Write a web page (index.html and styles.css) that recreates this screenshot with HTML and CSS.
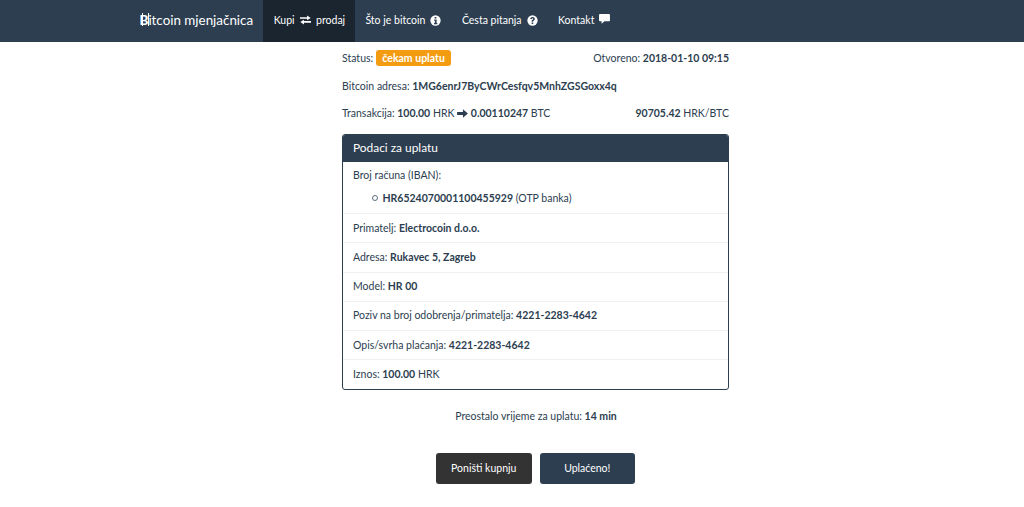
FILE: index.html
```html
<!DOCTYPE html>
<html lang="hr">
<head>
<meta charset="utf-8">
<title>Bitcoin mjenjačnica</title>
<link rel="stylesheet" href="styles.css">
</head>
<body>
<nav class="navbar">
  <a class="brand"><span class="brand-b">B</span>itcoin mjenjačnica</a>
  <a class="nav-link active">Kupi
    <svg class="ico swap" viewBox="0 0 14 12"><path d="M0 2.600h9V0.400L13.600 3.600 9 6.200V4.400H0zM14 7.400H5V5.600L0.400 8.600 5 11.600V9.400h9z" fill="#fff"/></svg>
    prodaj</a>
  <a class="nav-link">Što je bitcoin
    <svg class="ico" viewBox="0 0 12 12"><circle cx="6" cy="6" r="5.600" fill="#fff"/><path d="M5 2.200h2v1.700H5zM4.600 5h2.600v3.600h.8V10H4.400V8.600h.9V6.300h-.7z" fill="#2c3e50"/></svg></a>
  <a class="nav-link">Česta pitanja
    <svg class="ico" viewBox="0 0 12 12"><circle cx="6" cy="6" r="5.600" fill="#fff"/><path d="M3.600 4.400C3.800 3 4.800 2.300 6.100 2.300c1.400 0 2.400.9 2.400 2 0 1-.6 1.500-1.200 1.900-.4.3-.6.4-.6.9v.2H5.100v-.4c0-.9.4-1.300 1-1.700.4-.3.7-.5.7-.9 0-.4-.3-.7-.8-.7-.5 0-.8.3-.9.9zM5.100 8.200h1.700v1.500H5.100z" fill="#2c3e50"/></svg></a>
  <a class="nav-link">Kontakt
    <svg class="ico chat" viewBox="0 0 12 11"><path d="M1.200 0h9.600C11.500 0 12 .5 12 1.200v5.600c0 .7-.5 1.200-1.200 1.200H6L2.800 10.800V8H1.200C.5 8 0 7.500 0 6.800V1.200C0 .5.500 0 1.200 0z" fill="#fff"/></svg></a>
</nav>
<main class="content">
  <div class="info-row first">
    <span>Status: <span class="badge">čekam uplatu</span></span>
    <span>Otvoreno: <b>2018-01-10 09:15</b></span>
  </div>
  <div class="info-row">
    <span>Bitcoin adresa: <b>1MG6enrJ7ByCWrCesfqv5MnhZGSGoxx4q</b></span>
  </div>
  <div class="info-row">
    <span>Transakcija: <b>100.00</b> HRK <svg class="arrow" viewBox="0 0 12 10"><path d="M0 3.200h6.500V.3L12 5 6.500 9.700V6.800H0z" fill="#2c3e50"/></svg> <b>0.00110247</b> BTC</span>
    <b>90705.42 <span class="normal">HRK/BTC</span></b>
  </div>
  <section class="panel">
    <h2 class="panel-title">Podaci za uplatu</h2>
    <div class="panel-row iban">
      <div>Broj računa (IBAN):</div>
      <ul class="iban-list"><li><b>HR6524070001100455929</b> (OTP banka)</li></ul>
    </div>
    <div class="panel-row">Primatelj: <b>Electrocoin d.o.o.</b></div>
    <div class="panel-row">Adresa: <b>Rukavec 5, Zagreb</b></div>
    <div class="panel-row">Model: <b>HR 00</b></div>
    <div class="panel-row">Poziv na broj odobrenja/primatelja: <b>4221-2283-4642</b></div>
    <div class="panel-row">Opis/svrha plaćanja: <b>4221-2283-4642</b></div>
    <div class="panel-row">Iznos: <b>100.00</b> HRK</div>
  </section>
  <p class="remaining">Preostalo vrijeme za uplatu: <b>14 min</b></p>
  <div class="actions">
    <button class="btn btn-dark">Poništi kupnju</button>
    <button class="btn btn-primary">Uplaćeno!</button>
  </div>
</main>
</body>
</html>
```
FILE: styles.css
```css
* { box-sizing: border-box; }
html, body { margin: 0; padding: 0; }
body {
  font-family: Lato, "Open Sans", sans-serif;
  font-size: 10.5px;
  line-height: 17px;
  color: #2c3e50;
  background: #fff;
  height: 507px;
  overflow: hidden;
}
b { font-weight: 700; }
.normal { font-weight: 400; }
.navbar {
  display: flex;
  align-items: stretch;
  height: 42px;
  background: #2c3e50;
  padding-left: 139.500px;
  color: #fff;
}
.brand {
  font-size: 13.400px;
  line-height: 40px;
  margin-right: 9.500px;
}
.brand-b {
  position: relative;
  font-weight: 900;
}
.brand-b::before {
  content: "";
  position: absolute;
  left: 2px;
  top: 1px;
  width: 5px;
  height: 13px;
  border-left: 1px solid #fff;
  border-right: 1px solid #fff;
}
.nav-link {
  display: flex;
  align-items: center;
  gap: 3px;
  padding: 0 10.250px 2px;
  height: 42px;
}
.nav-link.active {
  background: #1a252f;
  padding: 0 10px 2px 11px;
}
.ico { width: 11px; height: 11px; margin-left: 2px; }
.swap { width: 11px; height: 10px; margin: -1px 2.500px 0 2px; }
.chat { width: 11px; height: 10px; margin: -2px 0 0 1.500px; }
.content {
  width: 387px;
  margin-left: 342px;
}
.info-row {
  display: flex;
  justify-content: space-between;
  align-items: center;
  height: 17px;
  margin-bottom: 10.500px;
}
.info-row.first { margin-top: 8px; }
.badge {
  display: inline-block;
  background: #f39c12;
  color: #fff;
  font-weight: 700;
  border-radius: 3px;
  padding: 0 6.500px;
  line-height: 16px;
}
.arrow { width: 11px; height: 9px; vertical-align: -0.500px; }
.panel {
  margin-top: 12px;
  border: 1px solid #2c3e50;
  border-radius: 3px;
  overflow: hidden;
  height: 256px;
}
.panel-title {
  margin: 0;
  background: #2c3e50;
  color: #fff;
  font-size: 11.900px;
  font-weight: 400;
  height: 27px;
  line-height: 25px;
  padding-left: 10px;
}
.panel-row {
  padding: 5.500px 10px;
  border-top: 1px solid #f2f2f2;
  height: 29.300px;
}
.panel-row.iban {
  height: 51px;
  border-top: 0;
  padding-top: 5px;
}
.iban-list {
  list-style: none;
  margin: 6px 0 0;
  padding-left: 18.500px;
}
.iban-list li::before {
  content: "";
  display: inline-block;
  width: 4px;
  height: 4px;
  margin-right: 5px;
  border: 1px solid #5d6d7c;
  border-radius: 50%;
  vertical-align: 1.500px;
}
.remaining {
  margin: 18px 0 0;
  text-align: center;
  padding-left: 1px;
}
.actions {
  display: flex;
  gap: 8px;
  margin-top: 27.500px;
  padding-left: 94px;
}
.btn {
  font: inherit;
  color: #fff;
  border: 0;
  border-radius: 3px;
  height: 31.500px;
  width: 95.500px;
  padding: 0;
}
.btn-dark { background: #333; }
.btn-primary { background: #2c3e50; }
```
